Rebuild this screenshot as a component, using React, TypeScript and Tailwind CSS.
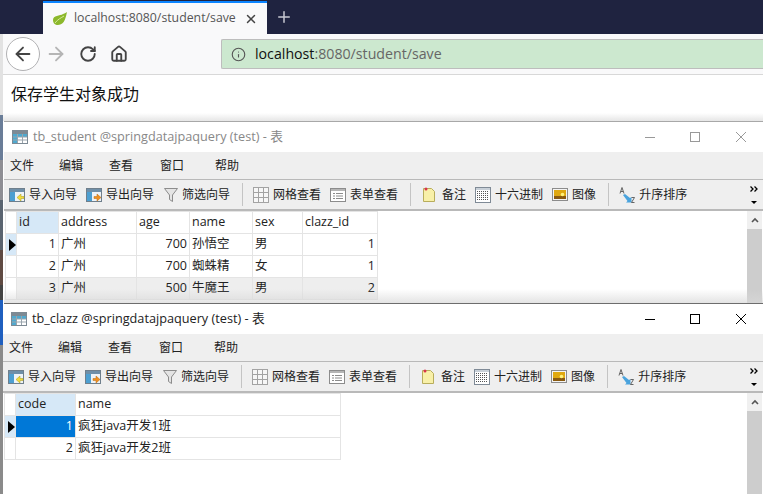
import { ArrowLeft, ArrowRight, Home, Info, Plus, RotateCw, X } from 'lucide-react';

const cjk = { fontFamily: '"Open Sans", "Noto Sans CJK SC", sans-serif' };

const stripColors = [
  ['h-[34px]', 'bg-[#1f2340]'],
  ['h-[81px]', 'bg-[#e2e2e2]'],
  ['h-[45px]', 'bg-[#6a7d98]'],
  ['h-[40px]', 'bg-[#8e8e94]'],
  ['h-[50px]', 'bg-[#5a6470]'],
  ['h-[35px]', 'bg-[#5f4a42]'],
  ['h-[15px]', 'bg-[#444444]'],
  ['h-[45px]', 'bg-[#1f5fbf]'],
  ['h-[149px]', 'bg-[#8a8a8a]'],
];

const TableIcon = ({ className = 'w-4 h-4' }: { className?: string }) => (
  <svg viewBox="0 0 16 16" className={className}>
    <rect x="0.5" y="1.5" width="15" height="13" fill="#fff" stroke="#7d8a94" />
    <rect x="1" y="2" width="14" height="3" fill="#7d8a94" />
    <rect x="1" y="5" width="14" height="3" fill="#4fa9cf" />
    <rect x="1" y="8" width="4.500" height="6" fill="#4fa9cf" />
    <path d="M1 8h14M1 11h14M5.500 5v9M10.500 5v9" stroke="#9aa5ad" />
  </svg>
);

const ImportIcon = ({ flip }: { flip?: boolean }) => (
  <svg viewBox="0 0 16 16" className="w-4 h-4 shrink-0">
    <rect x="0.5" y="1.5" width="15" height="13" fill="#eef3f7" stroke="#6f7f8c" />
    <rect x="1" y="2" width="14" height="3" fill="#6f8fa8" />
    <rect x="1" y="5" width="5" height="9" fill="#4d9fd1" />
    {flip ? (
      <path d="M8 9.5h3V7l4 3.5-4 3.5v-2.500H8z" fill="#f09020" stroke="#b86a10" strokeWidth="0.5" />
    ) : (
      <path d="M15 9.500h-3V7l-4 3.500 4 3.500v-2.500h3z" fill="#f2dc3c" stroke="#a89a18" strokeWidth="0.5" />
    )}
  </svg>
);

const FilterIcon = () => (
  <svg viewBox="0 0 16 16" className="w-4 h-4 shrink-0">
    <path d="M1.500 1.500h13L9.500 8v6.500l-3-2V8z" fill="#e4e4e4" stroke="#8c8c8c" />
  </svg>
);

const GridIcon = () => (
  <svg viewBox="0 0 16 16" className="w-4 h-4 shrink-0">
    <rect x="0.500" y="0.500" width="15" height="15" fill="#f7f7f7" stroke="#a3a3a3" />
    <path d="M5.500 1v14M10.500 1v14M1 5.500h14M1 10.500h14" stroke="#a3a3a3" />
  </svg>
);

const FormIcon = () => (
  <svg viewBox="0 0 16 16" className="w-4 h-4 shrink-0">
    <rect x="0.500" y="1.500" width="15" height="13" fill="#fff" stroke="#8c8c8c" />
    <rect x="1" y="2" width="14" height="2" fill="#b5b5b5" />
    <path d="M3 6.500h2M6 6.500h7M3 9h2M6 9h7M3 11.500h2M6 11.500h7" stroke="#8c8c8c" />
  </svg>
);

const NoteIcon = () => (
  <svg viewBox="0 0 16 16" className="w-4 h-4 shrink-0">
    <path d="M2.500 1.500h8l3 3v10h-11z" fill="#f8f0a8" stroke="#b8ad5c" />
    <circle cx="5" cy="2" r="1.500" fill="#d8344a" />
  </svg>
);

const HexIcon = () => (
  <svg viewBox="0 0 16 16" className="w-4 h-4 shrink-0">
    <rect x="0.500" y="0.500" width="15" height="15" fill="#fff" stroke="#7f8a96" />
    <rect x="1" y="1" width="14" height="2" fill="#c8d0d8" />
    <path d="M2 4.500h12M2 6.500h12M2 8.500h12M2 10.500h12M2 12.500h12" stroke="#555" strokeDasharray="1 1" />
  </svg>
);

const ImageIcon = () => (
  <svg viewBox="0 0 16 16" className="w-4 h-4 shrink-0">
    <rect x="0.500" y="1.500" width="15" height="12" fill="#f4f4f4" stroke="#8c8c8c" />
    <rect x="2" y="3" width="12" height="9" fill="#e0a810" />
    <rect x="2" y="9" width="12" height="3" fill="#8a5a10" />
    <circle cx="10.500" cy="7.500" r="1.800" fill="#fff27a" />
  </svg>
);

const SortIcon = () => (
  <svg viewBox="0 0 16 16" className="w-4 h-4 shrink-0">
    <path d="M4 8l2-1 5 4 1.500-1v5.500H7l1.500-1.500z" fill="#4aa3dd" />
    <path d="M1 6.500L3 0.500l2 6M1.800 4.500h2.400" fill="none" stroke="#555" strokeWidth="0.900" />
    <path d="M12.500 10.500h3l-3 5h3" fill="none" stroke="#555" strokeWidth="0.900" />
  </svg>
);

const Sep = ({ className }: { className: string }) => <div className={`w-px h-[23px] bg-[#c4c4c4] ${className}`} />;

const Toolbar = () => (
  <div className="h-8 shrink-0 flex items-center pl-[5px] bg-[#efefef] border-t border-b-2 border-[#b9b9b9] text-[12px] text-[#222]">
    <ImportIcon /><span className="ml-1">导入向导</span>
    <span className="ml-[9px]"><ImportIcon flip /></span><span className="ml-1">导出向导</span>
    <span className="ml-[9px]"><FilterIcon /></span><span className="ml-[3px]">筛选向导</span>
    <Sep className="ml-3" />
    <span className="ml-[10px]"><GridIcon /></span><span className="ml-1">网格查看</span>
    <span className="ml-[9px]"><FormIcon /></span><span className="ml-1">表单查看</span>
    <Sep className="ml-3" />
    <span className="ml-[10px]"><NoteIcon /></span><span className="ml-[5px]">备注</span>
    <span className="ml-[9px]"><HexIcon /></span><span className="ml-1">十六进制</span>
    <span className="ml-[9px]"><ImageIcon /></span><span className="ml-1">图像</span>
    <Sep className="ml-3" />
    <span className="ml-[10px]"><SortIcon /></span><span className="ml-1">升序排序</span>
    <div className="ml-auto mr-[4px] w-[10px] flex flex-col items-center leading-none">
      <svg viewBox="0 0 8 6" className="w-2 h-[6px]">
        <path d="M0.500 0.500L3 3 0.500 5.500M4.500 0.500L7 3 4.500 5.500" fill="none" stroke="#000" strokeWidth="1.300" />
      </svg>
      <span className="w-0 h-0 border-x-[3px] border-x-transparent border-t-[3px] border-t-black mt-[9px]" />
    </div>
  </div>
);

const Scrollbar = () => (
  <div className="w-[15px] mr-px flex flex-col shrink-0">
    <div className="h-[18px] bg-[#f0f0f0] flex items-center justify-center">
      <svg viewBox="0 0 8 6" className="w-2 h-[6px]">
        <path d="M1 5l3-3 3 3" fill="none" stroke="#555" strokeWidth="1.600" />
      </svg>
    </div>
    <div className="flex-1 bg-[#cdcdcd]" />
  </div>
);

type Col = { name: string; width: string; right?: boolean };

const DataTable = ({ cols, rows, selected, shaded }: { cols: Col[]; rows: string[][]; selected?: boolean; shaded?: number }) => (
  <table className="table-fixed border-collapse text-[12.5px] text-[#222] h-fit">
    <tbody>
      <tr className="h-[22px]">
        <td className="w-[11px] p-0 border border-[#e4e4e4]" />
        {cols.map((c, i) => (
          <td key={c.name} className={`${c.width} p-0 pl-[2px] border border-[#e4e4e4] ${i === 0 ? 'bg-[#d6e8f7]' : ''}`}>{c.name}</td>
        ))}
      </tr>
      {rows.map((r, ri) => (
        <tr key={ri} className={`h-[22px] ${shaded === ri ? 'bg-[#eeeeee]' : ''}`}>
          <td className={`p-0 border border-[#e4e4e4] ${ri === 0 ? 'bg-[#d6e8f7]' : 'bg-white'}`}>
            {ri === 0 && <div className="w-0 h-0 ml-[3px] border-y-[6px] border-y-transparent border-l-[7px] border-l-black" />}
          </td>
          {r.map((v, ci) => (
            <td
              key={ci}
              className={`p-0 px-[2px] border border-[#e4e4e4] whitespace-nowrap ${cols[ci].right ? 'text-right' : ''} ${selected && ri === 0 && ci === 0 ? 'bg-[#0078d7] text-white' : ''}`}
            >
              {v}
            </td>
          ))}
        </tr>
      ))}
    </tbody>
  </table>
);

const Menu = () => (
  <div className="h-[27px] shrink-0 flex items-center bg-[#efefef] text-[12px] text-[#222] pl-[6px]">
    <span>文件</span>
    <span className="ml-[25px]">编辑</span>
    <span className="ml-[26px]">查看</span>
    <span className="ml-[27px]">窗口</span>
    <span className="ml-[31px]">帮助</span>
  </div>
);

const TitleBar = ({ title, active }: { title: string; active?: boolean }) => (
  <div className={`h-[30px] shrink-0 flex items-center bg-white text-[12.7px] pl-2 ${active ? 'text-[#222]' : 'text-[#888]'}`}>
    <TableIcon />
    <span className="ml-[5px]">{title}</span>
    <div className="ml-auto flex items-center mr-[17px]">
      <span className={`w-[10px] h-px ${active ? 'bg-black' : 'bg-[#999]'}`} />
      <span className={`ml-[35px] w-[10px] h-[10px] border ${active ? 'border-black' : 'border-[#999]'}`} />
      <svg viewBox="0 0 10 10" className="ml-9 w-[10px] h-[10px]">
        <path d="M0 0l10 10M10 0L0 10" stroke={active ? '#000' : '#999'} strokeWidth="1" />
      </svg>
    </div>
  </div>
);

const App = () => (
  <div className="w-[763px] h-[494px] overflow-hidden flex bg-white" style={cjk}>
    <div className="w-[3px] shrink-0 flex flex-col">
      {stripColors.map(([h, c], i) => (
        <div key={i} className={`${h} ${c}`} />
      ))}
    </div>

    <div className="flex-1 min-w-0 flex flex-col">
      {/* browser */}
      <div className="h-[121px] shrink-0 flex flex-col relative">
        <div className="h-[34px] shrink-0 bg-[#1f2340] flex pl-[40px]">
          <div className="w-[224px] bg-[#f9f9fa] border-t-2 border-[#0a84ff] flex items-center pl-[9px] text-[12.300px] text-[#555] mt-px">
            <svg viewBox="0 0 16 16" className="w-4 h-4 shrink-0">
              <path d="M15 1c-1 4-2 13-9 13-3 0-5-2-5-5 0-5 7-4 10-6 2-1 3-1 4-2z" fill="#8cb82c" />
              <path d="M3 12c3-4 6-5 9-7" stroke="#d8ea9c" fill="none" />
            </svg>
            <span className="ml-[6px] whitespace-nowrap">localhost:8080/student/save</span>
            <X className="ml-2 w-[14px] h-[14px] shrink-0 text-[#444]" strokeWidth={2.500} />
          </div>
          <Plus className="ml-[8px] mt-[8px] w-[18px] h-[18px] text-[#c8c9d2]" strokeWidth={2} />
        </div>
        <div className="h-[41px] shrink-0 bg-[#f9f9fa] border-b border-[#d8d8d8] flex items-center">
          <div className="ml-[3px] w-[34px] h-[34px] rounded-full border border-[#b1b1b3] bg-white flex items-center justify-center">
            <ArrowLeft className="w-[22px] h-[22px] text-[#444]" strokeWidth={2} />
          </div>
          <ArrowRight className="ml-[5px] w-[22px] h-[22px] text-[#b5b5b5]" strokeWidth={2} />
          <RotateCw className="ml-[12px] w-[18px] h-[18px] text-[#444]" strokeWidth={2.500} />
          <Home className="ml-[13px] w-[18px] h-[18px] text-[#444]" strokeWidth={2.500} />
          <div className="ml-[93px] flex-1 h-[30px] bg-[#cce8cf] border border-r-0 border-[#bdbdbd] rounded-l-[2px] flex items-center pl-[9px] text-[14.200px] text-[#666]">
            <Info className="w-[15px] h-[15px] text-[#555]" strokeWidth={1.800} />
            <span className="ml-[9px]"><span className="text-[#111]">localhost</span>:8080/student/save</span>
          </div>
        </div>
        <div className="flex-1 bg-white pl-2 pt-2 text-[16px] text-[#111] leading-[22px]">保存学生对象成功</div>
        <div className="absolute left-0 right-0 bottom-0 h-[8px] bg-gradient-to-b from-transparent to-[#e6e6e6]" />
      </div>

      {/* tb_student window */}
      <div className="h-[183px] shrink-0 ml-px flex flex-col bg-white border-t border-[#a8a8a8] border-b border-b-[#6d6d6d] relative">
        <TitleBar title="tb_student @springdatajpaquery (test) - 表" />
        <Menu />
        <Toolbar />
        <div className="flex-1 min-h-0 flex overflow-hidden">
          <div className="flex-1 pl-px">
            <DataTable
              cols={[
                { name: 'id', width: 'w-[42px]', right: true },
                { name: 'address', width: 'w-[78px]' },
                { name: 'age', width: 'w-[53px]', right: true },
                { name: 'name', width: 'w-[63px]' },
                { name: 'sex', width: 'w-[50px]' },
                { name: 'clazz_id', width: 'w-[75px]', right: true },
              ]}
              rows={[
                ['1', '广州', '700', '孙悟空', '男', '1'],
                ['2', '广州', '700', '蜘蛛精', '女', '1'],
                ['3', '广州', '500', '牛魔王', '男', '2'],
              ]}
              shaded={2}
            />
          </div>
          <Scrollbar />
        </div>
        <div className="absolute left-0 right-0 bottom-0 h-[14px] bg-gradient-to-b from-transparent to-[#d8d8d8]/70" />
      </div>

      {/* tb_clazz window */}
      <div className="flex-1 min-h-0 flex flex-col bg-white">
        <TitleBar title="tb_clazz @springdatajpaquery (test) - 表" active />
        <Menu />
        <Toolbar />
        <div className="flex-1 min-h-0 flex overflow-hidden">
          <div className="flex-1 pl-px">
            <DataTable
              cols={[
                { name: 'code', width: 'w-[60px]', right: true },
                { name: 'name', width: 'w-[265px]' },
              ]}
              rows={[
                ['1', '疯狂java开发1班'],
                ['2', '疯狂java开发2班'],
              ]}
              selected
            />
          </div>
          <Scrollbar />
        </div>
      </div>
    </div>
  </div>
);

export default App;
